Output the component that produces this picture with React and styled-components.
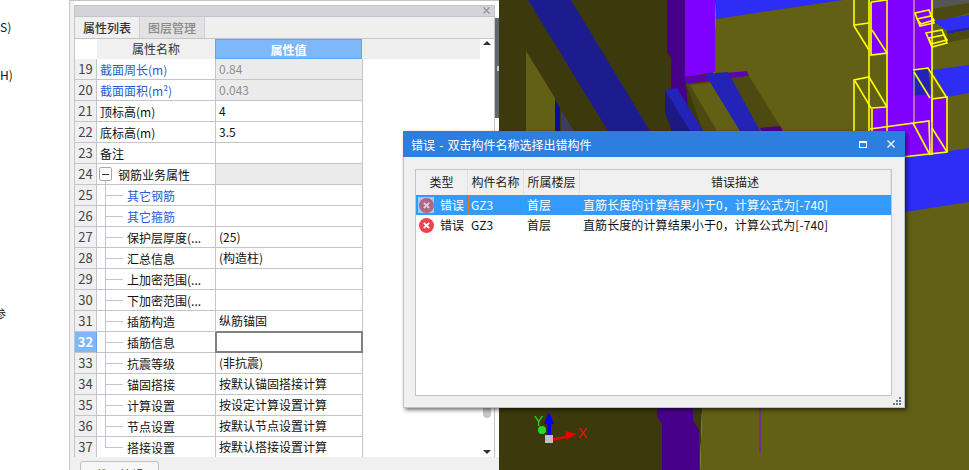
import React from 'react'
import styled, { createGlobalStyle } from 'styled-components'

const GlobalStyle = createGlobalStyle`
  html, body {
    margin: 0;
    padding: 0;
    background: #fff;
  }
  * {
    box-sizing: border-box;
  }
`

const rows = [
  { no: 19, name: '截面周长(m)', value: '0.84', blue: true, locked: true },
  { no: 20, name: '截面面积(m²)', value: '0.043', blue: true, locked: true },
  { no: 21, name: '顶标高(m)', value: '4' },
  { no: 22, name: '底标高(m)', value: '3.5' },
  { no: 23, name: '备注', value: '' },
  { no: 24, name: '钢筋业务属性', value: '', group: true, locked: true },
  { no: 25, name: '其它钢筋', value: '', child: true, blue: true },
  { no: 26, name: '其它箍筋', value: '', child: true, blue: true },
  { no: 27, name: '保护层厚度(...', value: '(25)', child: true },
  { no: 28, name: '汇总信息', value: '(构造柱)', child: true },
  { no: 29, name: '上加密范围(...', value: '', child: true },
  { no: 30, name: '下加密范围(...', value: '', child: true },
  { no: 31, name: '插筋构造', value: '纵筋锚固', child: true },
  { no: 32, name: '插筋信息', value: '', child: true, active: true },
  { no: 33, name: '抗震等级', value: '(非抗震)', child: true },
  { no: 34, name: '锚固搭接', value: '按默认锚固搭接计算', child: true },
  { no: 35, name: '计算设置', value: '按设定计算设置计算', child: true },
  { no: 36, name: '节点设置', value: '按默认节点设置计算', child: true },
  { no: 37, name: '搭接设置', value: '按默认搭接设置计算', child: true, last: true },
]

const errors = [
  { name: 'GZ3', floor: '首层', selected: true },
  { name: 'GZ3', floor: '首层' },
]

const errorText = '直筋长度的计算结果小于0，计算公式为[-740]'

// 3D view drawing, coordinates are page pixels
const DARK = '#3c390c'
const OLIVE = '#626014'
const DIM = '#4c4a10'
const BAND = '#1c1c8e'
const BLUE = '#2d2df5'
const MID = '#2323b8'
const PURPLE = '#8000ff'
const DEEP = '#47008a'

const shapes = [
  ['499,0 716,0 700,470 499,470', DARK],
  ['716,0 969,0 969,470 700,470', OLIVE],
  ['528,0 571,0 650,131 608,131', BAND],
  ['526,51 555,98 555,131 526,131', OLIVE],
  ['555,100 560,108 560,131 555,131', '#0d0d96'],
  ['561,110 574,131 561,131', '#3d3d60'],
  ['667,0 685,0 685,77 690,131 671,131 671,58 667,52', DEEP],
  ['716,0 843,0 716,19', BLUE],
  ['685,0 715,0 715,72 685,77', PURPLE],
  ['684,77 747,71 749,76 688,84', '#5c00b0'],
  ['686,84 749,76 783,131 703,131', DIM],
  ['690,85 717,82 740,131 717,131', OLIVE],
  ['705,74 728,72 760,131 740,131', MID],
  ['760,128 780,126 783,131 762,131', DEEP],
  ['665,90 690,131 672,131 665,113', '#1a1a80'],
  ['665,90 677,88 703,131 690,131', MID],
  ['933,0 969,0 969,3 933,9', '#555555'],
  ['933,9 969,3 969,13 933,24', DIM],
  ['933,21 969,15 969,27 947,31', BLUE],
  ['947,31 969,27 969,30 947,34', MID],
  ['947,34 969,30 969,38 947,43', DIM],
  ['932,70 969,65 969,93 947,97', BLUE],
  ['905,158 969,148 969,202 905,212', BLUE],
  ['872,3 887,0 887,53 872,55', PURPLE],
  ['887,0 932,0 932,123 887,129', PURPLE],
  ['872,109 887,107 887,131 872,131', PURPLE],
  ['870,129 932,121 947,152 893,158', PURPLE],
  ['932,99 947,97 947,152 932,155', PURPLE],
  ['912,70 932,68 938,93 913,96', MID],
  ['928,68 947,98 932,99', OLIVE],
  ['657,408 693,408 693,420 699,430 699,470 662,470 662,424 657,417', DEEP],
  ['693,408 700,408 700,470 699,430 693,420', DARK],
]

const wires = [
  'M854 0V25L869 23', 'M854 26L869 50', 'M869 0V131',
  'M871 2L887 0V131', 'M871 2V55L887 53L872 30', 'M854 131V80L869 77L887 107',
  'M855 81L871 108L887 107', 'M872 109V131',
  'M932 0V122', 'M870 129L929 121L930 154', 'M913 123L930 155',
  'M932 128L947 152', 'M932 99L947 97V152L893 158', 'M932 99V155',
  'M913 70L928 68L947 98', 'M914 72L930 98',
  'M915 13L929 10L934 23L920 26Z', 'M917 19L931 16L934 20L921 24Z',
  'M926 33L942 30L947 43L932 47Z', 'M929 38L944 35L947 40L931 44Z',
]

const SceneDrawing = () => (
  <SceneSvg viewBox="499 0 470 470">
    {shapes.map(([points, fill], i) => (
      <polygon key={i} points={points} fill={fill} />
    ))}
    <path d="M914 0V123" stroke="#eadc8a" strokeWidth="1" fill="none" />
    {wires.map((d, i) => (
      <path key={i} d={d} stroke="#ffff00" strokeWidth="1.6" fill="none" />
    ))}
    <path d="M760 408V453" stroke="#7a10e0" strokeWidth="1.2" />

    <circle cx="542" cy="430" r="4" fill="#22dd22" />
    <path d="M553 438L566 436L565 431L577 434L566 440L566 438L553 441Z" fill="#ee0000" />
    <path d="M547.5 436V424H544L549 412L554 424H551V436Z" fill="#0000ee" />
    <rect x="545" y="435" width="8" height="8" fill="#c0c0c0" />
    <AxisLabel x="534" y="426" fill="#22dd22">Y</AxisLabel>
    <AxisLabel x="578" y="438" fill="#ee1111">X</AxisLabel>
  </SceneSvg>
)

const CloseGlyph = ({ size, color, width }) => (
  <svg width={size} height={size} viewBox="0 0 8 8">
    <path d="M0.5 0.5L7.5 7.5M7.5 0.5L0.5 7.5" stroke={color} strokeWidth={width} fill="none" />
  </svg>
)

const ErrorIcon = ({ selected }) => (
  <IconBox $selected={selected}>
    <svg width="15" height="15" viewBox="0 0 15 15">
      <circle cx="7.5" cy="7.5" r="7.5" fill={selected ? '#b2667f' : '#f2404c'} />
      <path d="M4.8 4.8L10.2 10.2M10.2 4.8L4.8 10.2" stroke={selected ? '#e0d4dc' : '#fff'} strokeWidth="1.8" />
    </svg>
  </IconBox>
)

const GripDots = () => (
  <Grip viewBox="0 0 8 8" width="8" height="8">
    <path d="M6 0h2v2H6zM3 3h2v2H3zM6 3h2v2H6zM0 6h2v2H0zM3 6h2v2H3zM6 6h2v2H6z" fill="#6f7478" />
  </Grip>
)

const App = () => {
  return (
    <Page>
      <GlobalStyle />

      <Sidebar>
        <SideLabel $top={18}>S)</SideLabel>
        <SideLabel $top={30}>H)</SideLabel>
        <SideLabel $top={221} $shift={-6}>参</SideLabel>
      </Sidebar>

      <PanelArea>
        <PanelRow>
          <Card>
            <TitleStrip>
              <CloseGlyph size={7} color="#8a8a8a" width={1.4} />
            </TitleStrip>
            <TabBar>
              <Tab $active>属性列表</Tab>
              <Tab>图层管理</Tab>
            </TabBar>
            <GridArea>
              <TableBody>
                <HeaderRow>
                  <Corner />
                  <HeaderCell>属性名称</HeaderCell>
                  <HeaderCell $active>属性值</HeaderCell>
                  <HeaderFill />
                </HeaderRow>
                {rows.map((row) => (
                  <Row key={row.no}>
                    <NumberCell $active={row.active}>{row.no}</NumberCell>
                    <NameCell $blue={row.blue}>
                      {row.group && <ExpandBox />}
                      {row.child && <TreeGuide $last={row.last} />}
                      {row.name}
                    </NameCell>
                    <ValueCell $locked={row.locked} $active={row.active}>{row.value}</ValueCell>
                  </Row>
                ))}
              </TableBody>
              <ScrollBar>
                <ArrowUp />
                <Thumb />
                <ArrowDown />
              </ScrollBar>
            </GridArea>
          </Card>
          <Splitter>
            <SplitHandle />
          </Splitter>
        </PanelRow>
        <Footer>
          <FooterButton>截面编辑</FooterButton>
        </Footer>
      </PanelArea>

      <Scene>
        <SceneDrawing />
      </Scene>

      <Dialog>
        <DialogTitle>
          <TitleText>错误 - 双击构件名称选择出错构件</TitleText>
          <WindowButtons>
            <MaxBox />
            <CloseGlyph size={8} color="#fff" width={1.3} />
          </WindowButtons>
        </DialogTitle>
        <ListBox>
          <ListHeader>
            <ListHead>类型</ListHead>
            <ListHead>构件名称</ListHead>
            <ListHead>所属楼层</ListHead>
            <ListHead>错误描述</ListHead>
          </ListHeader>
          {errors.map((err, i) => (
            <ListRow key={i} $selected={err.selected}>
              <TypeCell>
                <ErrorIcon selected={err.selected} />
                错误
              </TypeCell>
              <ListCell $focus={err.selected}>{err.name}</ListCell>
              <ListCell>{err.floor}</ListCell>
              <DescCell>{errorText}</DescCell>
            </ListRow>
          ))}
        </ListBox>
        <GripDots />
      </Dialog>
    </Page>
  )
}

export default App

const Page = styled.div`
  position: relative;
  display: flex;
  width: 969px;
  height: 470px;
  overflow: hidden;
  background: #fff;
  color: #111;
  font-family: "Noto Sans CJK SC", "Liberation Sans", sans-serif;
  font-size: 12px;
`

const Sidebar = styled.div`
  flex: 0 0 70px;
  display: flex;
  flex-direction: column;
  overflow: hidden;
  border-right: 1px solid #c8c8c8;
`

const SideLabel = styled.div`
  margin-top: ${(p) => p.$top}px;
  margin-left: ${(p) => p.$shift || 0}px;
  line-height: 18px;
  height: 18px;
`

const PanelArea = styled.div`
  flex: 0 0 429px;
  display: flex;
  flex-direction: column;
  padding-top: 5px;
  background: linear-gradient(#f0f0f0, #f0f0f0) no-repeat 0 0 / 4px 100%, #fff;
  border-top: 1px solid #c4c4c8;
  padding-left: 4px;
`

const PanelRow = styled.div`
  display: flex;
  height: 452px;
  margin-top: -1px;
  flex: none;
`

const Card = styled.div`
  width: 421px;
  display: flex;
  flex-direction: column;
  border: 1px solid #c4c4cc;
  border-bottom: none;
  background: #fff;
`

const TitleStrip = styled.div`
  height: 11px;
  flex: none;
  display: flex;
  align-items: center;
  justify-content: flex-end;
  padding: 0 4px 1px 0;
  background: #d3d4d8;
  border-bottom: 1px solid #c4c4cc;
`

const TabBar = styled.div`
  height: 22px;
  flex: none;
  display: flex;
  background: #efeff0;
  border-bottom: 1px solid #c4c4cc;
`

const Tab = styled.div`
  width: 65px;
  text-align: center;
  line-height: 21px;
  font-weight: 500;
  color: ${(p) => (p.$active ? '#333' : '#8a8a8a')};
  background: ${(p) => (p.$active ? '#f0f0f0' : '#e2e2e2')};
  border-right: 1px solid #d0d0d4;
`

const GridArea = styled.div`
  flex: 1;
  display: flex;
  min-height: 0;
`

const TableBody = styled.div`
  width: 405px;
  flex: none;
`

const HeaderRow = styled.div`
  display: flex;
  height: 20px;
`

const Corner = styled.div`
  width: 22px;
  background: #fff;
`

const HeaderCell = styled.div`
  width: ${(p) => (p.$active ? 147 : 118)}px;
  line-height: 19px;
  text-align: center;
  background: ${(p) => (p.$active ? '#7eb8f9' : '#f0f0f0')};
  color: ${(p) => (p.$active ? '#fff' : '#333')};
  font-weight: ${(p) => (p.$active ? 700 : 400)};
  border: ${(p) => (p.$active ? '1px solid #5ea4ee' : 'none')};
`

const HeaderFill = styled.div`
  flex: 1;
  background: #efefef;
`

const Row = styled.div`
  display: grid;
  grid-template-columns: 22px 119px 147px;
  height: 21px;
`

const NumberCell = styled.div`
  text-align: center;
  line-height: 20px;
  font-size: 13px;
  color: ${(p) => (p.$active ? '#fff' : '#444')};
  font-weight: ${(p) => (p.$active ? 700 : 400)};
  background: ${(p) => (p.$active ? '#7eb8f9' : '#f0f0f0')};
  border-right: 1px solid ${(p) => (p.$active ? '#5ea4ee' : '#c4c4cc')};
  border-bottom: 1px solid #c4c4cc;
`

const NameCell = styled.div`
  display: flex;
  align-items: center;
  padding-left: 3px;
  white-space: nowrap;
  overflow: hidden;
  height: 21px;
  color: ${(p) => (p.$blue ? '#2a5bd7' : '#111')};
  border-right: 1px solid #c4c4cc;
  border-bottom: 1px solid #c4c4cc;
`

const TreeGuide = styled.span`
  flex: none;
  align-self: flex-start;
  width: 18px;
  height: ${(p) => (p.$last ? '11px' : '20px')};
  margin: 0 4px 0 5px;
  border-left: 1px solid #c4c4cc;
  background: linear-gradient(#c4c4cc, #c4c4cc) no-repeat 0 ${(p) => (p.$last ? '100%' : '10px')} / 100% 1px;
`

const ExpandBox = styled.span`
  position: relative;
  flex: none;
  width: 13px;
  height: 14px;
  margin-left: -1px;
  margin-right: 6px;
  border: 1px solid #a8a8a8;
  border-radius: 2px;
  background: linear-gradient(#333, #333) no-repeat center / 7px 1px, #fff;

  &::after {
    content: '';
    position: absolute;
    left: 5px;
    top: 13px;
    width: 1px;
    height: 3px;
    background: #c4c4cc;
  }
`

const ValueCell = styled.div`
  padding-left: 3px;
  line-height: 20px;
  white-space: nowrap;
  height: 21px;
  background: ${(p) => (p.$locked ? '#ebebeb' : '#fff')};
  color: ${(p) => (p.$locked ? '#909090' : '#111')};
  border-right: 1px solid ${(p) => (p.$active ? '#808080' : '#c4c4cc')};
  border-bottom: 1px solid ${(p) => (p.$active ? '#808080' : '#c4c4cc')};
  box-shadow: ${(p) => (p.$active ? 'inset 0 0 0 1px #808080, 0 -1px 0 #808080, -1px 0 0 #808080' : 'none')};
`

const ScrollBar = styled.div`
  flex: 1;
  display: flex;
  flex-direction: column;
  align-items: center;
  background: #fff;
  padding: 2px 0 3px;
`

const ArrowUp = styled.div`
  width: 0;
  height: 0;
  border-left: 4px solid transparent;
  border-right: 4px solid transparent;
  border-bottom: 4px solid #333;
`

const ArrowDown = styled.div`
  width: 0;
  height: 0;
  margin-top: 32px;
  border-left: 4px solid transparent;
  border-right: 4px solid transparent;
  border-top: 4px solid #333;
`

const Thumb = styled.div`
  width: 8px;
  height: 80px;
  margin-top: auto;
  background: #c8c8c8;
  border-radius: 0 0 4px 4px;
`

const Splitter = styled.div`
  flex: none;
  width: 4px;
  padding-top: 13px;
  background: #fff;
`

const SplitHandle = styled.div`
  height: 100px;
  background: linear-gradient(to left, #c8ccd0 0 2px, transparent 2px) no-repeat 0 center / 4px 5px, #5f6770;
`

const Footer = styled.div`
  flex: 1;
  background: #f0f0f0;
  padding: 4px 0 0 6px;
  overflow: hidden;
`

const FooterButton = styled.div`
  width: 79px;
  height: 24px;
  line-height: 26px;
  text-align: center;
  color: #333;
  background: #f6f6f6;
  border: 1px solid #c0c0c0;
  border-radius: 3px;
`

const Scene = styled.div`
  flex: 1;
  min-width: 0;
`

const SceneSvg = styled.svg`
  display: block;
  width: 470px;
  height: 470px;
`

const AxisLabel = styled.text`
  font-family: "Liberation Sans", sans-serif;
  font-size: 14px;
`

const Dialog = styled.div`
  position: absolute;
  left: 403px;
  top: 131px;
  width: 502px;
  height: 277px;
  background: #f0f0f0;
  border: 1px solid #b8c4d4;
  border-top: none;
  box-shadow: 2px 2px 4px rgba(0, 0, 0, 0.55);
`

const DialogTitle = styled.div`
  display: flex;
  align-items: center;
  justify-content: space-between;
  height: 26px;
  margin: 0 -1px;
  padding: 0 10px 0 8px;
  background: #2c7fdf;
  color: #fff;
`

const TitleText = styled.span`
  word-spacing: 1.5px;
`

const WindowButtons = styled.div`
  display: flex;
  align-items: center;
  gap: 20px;
`

const MaxBox = styled.span`
  width: 8px;
  height: 7px;
  border: 1px solid #fff;
  border-top-width: 2px;
`

const ListBox = styled.div`
  margin: 12px 12px 0 11px;
  height: 227px;
  background: #fff;
  border: 1px solid #c4c4c4;
`

const ListHeader = styled.div`
  display: grid;
  grid-template-columns: 52px 56px 56px 1fr;
  height: 25px;
  background: #f0f0f0;
`

const ListHead = styled.div`
  text-align: center;
  line-height: 24px;
  color: #222;
  border-right: 1px solid #e2e2e2;
`

const ListRow = styled.div`
  display: grid;
  grid-template-columns: 52px 56px 56px 1fr;
  height: 20px;
  line-height: 20px;
  background: ${(p) => (p.$selected ? '#349afb' : '#fff')};
  color: ${(p) => (p.$selected ? '#fff' : '#111')};
`

const TypeCell = styled.div`
  display: flex;
  align-items: center;
  gap: 6px;
  padding-left: 2px;
`

const IconBox = styled.span`
  display: flex;
  align-items: center;
  justify-content: center;
  width: 16px;
  height: 16px;
  background: ${(p) => (p.$selected ? '#a3c9ef' : 'transparent')};
`

const ListCell = styled.div`
  padding-left: 3px;
  white-space: nowrap;
  outline: ${(p) => (p.$focus ? '1px dotted #e07b1a' : 'none')};
  outline-offset: -1px;
`

const DescCell = styled(ListCell)`
  letter-spacing: 0.09px;
`

const Grip = styled.svg`
  position: absolute;
  right: 3px;
  bottom: 2px;
`
